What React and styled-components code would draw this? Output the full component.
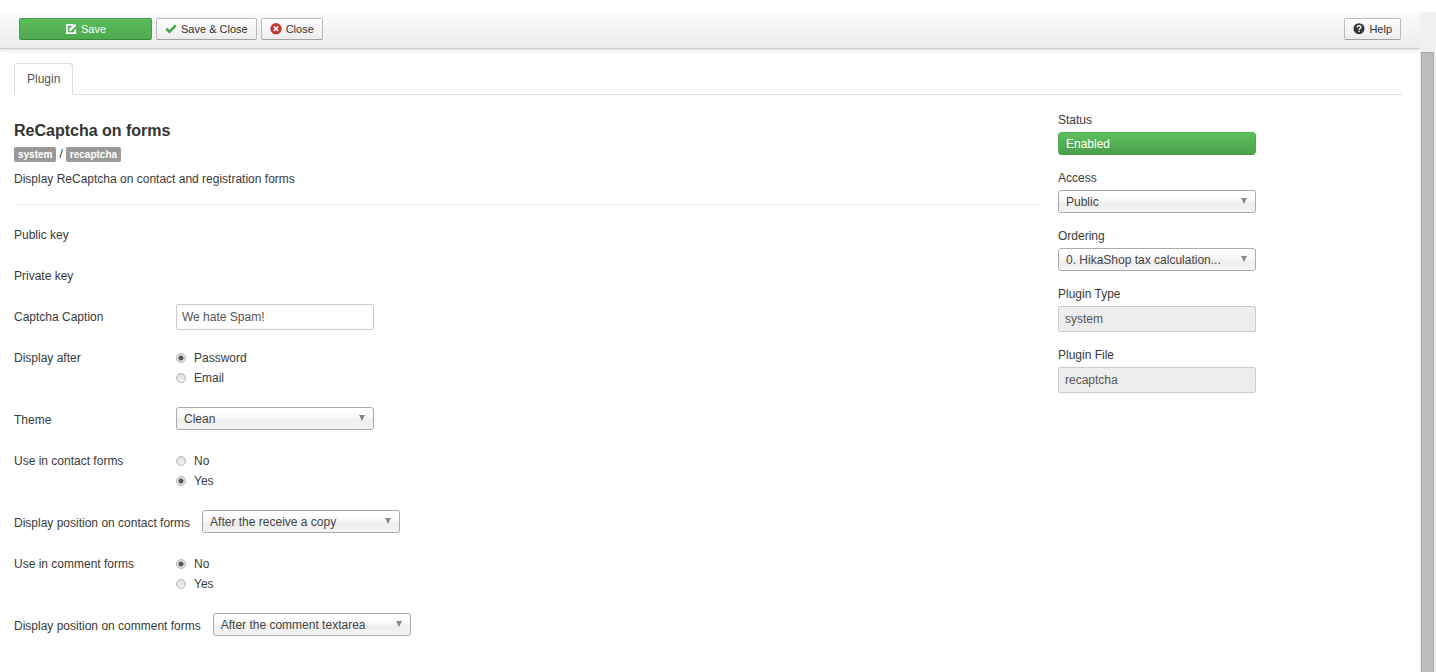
import React from "react";
import styled, { createGlobalStyle, css } from "styled-components";

const Global = createGlobalStyle`
  *, *::before, *::after { box-sizing: border-box; }
  body {
    margin: 0;
    background: #fff;
    color: #3a3a3a;
    font-family: "Liberation Sans", Arial, sans-serif;
    font-size: 12px;
    line-height: 18px;
  }
  button, input, select { font: inherit; margin: 0; }
`;

const Shell = styled.div`
  display: grid;
  grid-template-columns: minmax(0, 1fr) 16px;
  min-height: 100vh;
  padding-top: 12px;
`;

const Page = styled.div`
  min-width: 0;
`;

const ScrollTrack = styled.div`
  display: flex;
  padding: 40px 2px 0 1px;
  background: #f0f0f0;
`;

const ScrollThumb = styled.div`
  flex: 1;
  border: 1px solid #a8a8a8;
  border-bottom: 0;
  background: #bcbcbc;
`;

const Toolbar = styled.header`
  display: flex;
  align-items: flex-start;
  gap: 4px;
  height: 37px;
  padding: 6px 19px;
  background: linear-gradient(#fcfcfc, #ebebeb);
  border-bottom: 1px solid #cfcfcf;
  box-shadow: 0 1px 3px rgba(0, 0, 0, 0.15);
`;

const Spacer = styled.div`
  flex: 1;
`;

const ToolButton = styled.button`
  display: inline-flex;
  align-items: center;
  justify-content: center;
  gap: 4px;
  height: 22px;
  padding: 0 8px;
  border: 1px solid #bbb;
  border-bottom-color: #a2a2a2;
  border-radius: 2px;
  background: linear-gradient(#fff, #ececec);
  color: #333;
  font-size: 11px;
  line-height: 16px;
  svg { flex: none; }
  ${(p) =>
    p.$primary &&
    css`
      width: 133px;
      border-color: #4aa04a #4aa04a #3c8a3c;
      background: linear-gradient(#5bbd5b, #4fa950);
      color: #fff;
    `}
`;

const Tabs = styled.nav`
  display: flex;
  margin: 14px 18px 0 14px;
  border-bottom: 1px solid #e2e2e2;
`;

const Tab = styled.a`
  margin-bottom: -1px;
  padding: 6px 12px;
  border: 1px solid #ddd;
  border-bottom-color: #fff;
  border-radius: 4px 4px 0 0;
  background: #fff;
  color: #555;
  text-decoration: none;
`;

const Columns = styled.main`
  display: grid;
  grid-template-columns: minmax(0, 1fr) 345px;
  gap: 16px;
  padding: 16px 17px 0 14px;
`;

const Details = styled.section`
  padding-top: 9px;
`;

const Title = styled.h1`
  margin: 0;
  color: #333;
  font-size: 16px;
  line-height: 22px;
`;

const Badges = styled.div`
  display: flex;
  align-items: center;
  gap: 3px;
  margin-top: 3px;
`;

const Badge = styled.span`
  padding: 1px 4px 0;
  border-radius: 2px;
  background: #999;
  color: #fff;
  font-size: 10px;
  font-weight: bold;
  line-height: 14px;
`;

const Description = styled.p`
  margin: 7px 0 0;
`;

const Divider = styled.hr`
  margin: 16px 0 17px;
  border: 0;
  border-top: 1px solid #eee;
`;

const Row = styled.div`
  display: flex;
  align-items: flex-start;
  gap: 12px;
  height: ${(p) => (p.$double ? 44 : 23)}px;
  margin-bottom: 18px;
`;

const RowLabel = styled.label`
  min-width: 150px;
  padding-top: 4px;
  white-space: nowrap;
`;

const field = css`
  display: block;
  width: 198px;
  border-radius: 3px;
`;

const TextInput = styled.input`
  ${field}
  height: 26px;
  padding: 0 5px;
  border: 1px solid #ccc;
  border-radius: 2px;
  background: #fff;
  color: #555;
  &:read-only { background: #eee; padding: 0 6px; }
`;

const selectArrow = css`
  &::after {
    content: "";
    position: absolute;
    top: 8px;
    right: 9px;
    border: 3px solid transparent;
    border-top: 6px solid #888;
    border-bottom: 0;
    pointer-events: none;
  }
`;

const SelectWrap = styled.div`
  position: relative;
  width: 198px;
  ${(p) => !p.$status && selectArrow}
`;

const SelectBox = styled.select`
  ${field}
  appearance: none;
  height: 23px;
  padding: 0 24px 0 7px;
  border: 1px solid #aaa;
  background: linear-gradient(#fff 20%, #f6f6f6 50%, #eee 52%, #f4f4f4);
  color: #444;
  text-overflow: ellipsis;
  ${(p) =>
    p.$status &&
    css`
      border-color: #52b152 #4dab4d #469746;
      border-radius: 4px;
      background: linear-gradient(#5bc15b, #4b9f4c);
      color: #fff;
    `}
`;

const Choices = styled.div`
  display: flex;
  flex-direction: column;
  gap: 2px;
  padding-top: 4px;
`;

const Choice = styled.label`
  display: flex;
  align-items: center;
  gap: 8px;
`;

const Radio = styled.input`
  appearance: none;
  width: 10px;
  height: 10px;
  border: 1px solid #b4b4b4;
  border-radius: 50%;
  background: linear-gradient(#ddd, #f2f2f2);
  &:checked { background: radial-gradient(circle, #555 0 2px, #e4e4e4 3px); }
`;

const Sidebar = styled.aside``;

const SideField = styled.div`
  display: flex;
  flex-direction: column;
  gap: 3px;
  margin-bottom: 14px;
`;

const EditIcon = () => (
  <svg width="12" height="12" viewBox="0 0 12 12" fill="none" aria-hidden="true">
    <path d="M8 1.900H1.900v8.300h8.300V6.500" stroke="#fff" strokeWidth="1.800" />
    <path d="M4 8.200l.5-2.400L9.700.8l1.700 1.700-5.100 5.100z" fill="#fff" />
  </svg>
);

const CheckIcon = () => (
  <svg width="12" height="12" viewBox="0 0 12 12" fill="none" aria-hidden="true">
    <path d="M1.300 5.800l3.200 3L10.800 2.300" stroke="#46a546" strokeWidth="2.600" />
  </svg>
);

const CloseIcon = () => (
  <svg width="12" height="12" viewBox="0 0 12 12" fill="none" aria-hidden="true">
    <circle cx="6" cy="5.700" r="5.600" fill="#bd362f" />
    <path d="M3.800 3.500l4.400 4.400M8.200 3.500l-4.400 4.400" stroke="#fff" strokeWidth="1.600" />
  </svg>
);

const HelpIcon = () => (
  <svg width="12" height="12" viewBox="0 0 12 12" fill="none" aria-hidden="true">
    <circle cx="6" cy="5.700" r="5.500" fill="#333" />
    <path d="M4.200 4.500c0-2.400 3.700-2.300 3.700-.2C7.900 5.500 6.100 5.500 6.100 6.900" stroke="#fff" strokeWidth="1.400" />
    <rect x="5.400" y="7.700" width="1.400" height="1.400" fill="#fff" />
  </svg>
);

function Select({ id, value, status }) {
  return (
    <SelectWrap $status={status}>
      <SelectBox id={id} $status={status} defaultValue={value}>
        <option>{value}</option>
      </SelectBox>
    </SelectWrap>
  );
}

function SelectRow({ id, label, value }) {
  return (
    <Row>
      <RowLabel htmlFor={id}>{label}</RowLabel>
      <Select id={id} value={value} />
    </Row>
  );
}

function RadioRow({ name, label, options, selected }) {
  return (
    <Row $double role="radiogroup" aria-labelledby={name}>
      <RowLabel as="span" id={name}>{label}</RowLabel>
      <Choices>
        {options.map((o) => (
          <Choice key={o}>
            <Radio type="radio" name={name} defaultChecked={o === selected} />
            {o}
          </Choice>
        ))}
      </Choices>
    </Row>
  );
}

export default function App() {
  return (
    <>
      <Global />
      <Shell>
        <Page>
          <Toolbar>
            <ToolButton $primary><EditIcon />Save</ToolButton>
            <ToolButton><CheckIcon />Save &amp; Close</ToolButton>
            <ToolButton><CloseIcon />Close</ToolButton>
            <Spacer />
            <ToolButton><HelpIcon />Help</ToolButton>
          </Toolbar>
          <Tabs>
            <Tab href="#plugin">Plugin</Tab>
          </Tabs>
          <Columns id="plugin">
            <Details>
              <Title>ReCaptcha on forms</Title>
              <Badges>
                <Badge>system</Badge>/<Badge>recaptcha</Badge>
              </Badges>
              <Description>Display ReCaptcha on contact and registration forms</Description>
              <Divider />
              <Row><RowLabel as="span">Public key</RowLabel></Row>
              <Row><RowLabel as="span">Private key</RowLabel></Row>
              <Row>
                <RowLabel htmlFor="caption">Captcha Caption</RowLabel>
                <TextInput id="caption" defaultValue="We hate Spam!" />
              </Row>
              <RadioRow name="after" label="Display after" options={["Password", "Email"]} selected="Password" />
              <SelectRow id="theme" label="Theme" value="Clean" />
              <RadioRow name="contact" label="Use in contact forms" options={["No", "Yes"]} selected="Yes" />
              <SelectRow id="contact-position" label="Display position on contact forms" value="After the receive a copy" />
              <RadioRow name="comment" label="Use in comment forms" options={["No", "Yes"]} selected="No" />
              <SelectRow id="comment-position" label="Display position on comment forms" value="After the comment textarea" />
            </Details>
            <Sidebar>
              <SideField>
                <label htmlFor="status">Status</label>
                <Select id="status" value="Enabled" status />
              </SideField>
              <SideField>
                <label htmlFor="access">Access</label>
                <Select id="access" value="Public" />
              </SideField>
              <SideField>
                <label htmlFor="ordering">Ordering</label>
                <Select id="ordering" value="0. HikaShop tax calculation..." />
              </SideField>
              <SideField>
                <label htmlFor="type">Plugin Type</label>
                <TextInput id="type" readOnly defaultValue="system" />
              </SideField>
              <SideField>
                <label htmlFor="file">Plugin File</label>
                <TextInput id="file" readOnly defaultValue="recaptcha" />
              </SideField>
            </Sidebar>
          </Columns>
        </Page>
        <ScrollTrack aria-hidden="true">
          <ScrollThumb />
        </ScrollTrack>
      </Shell>
    </>
  );
}
